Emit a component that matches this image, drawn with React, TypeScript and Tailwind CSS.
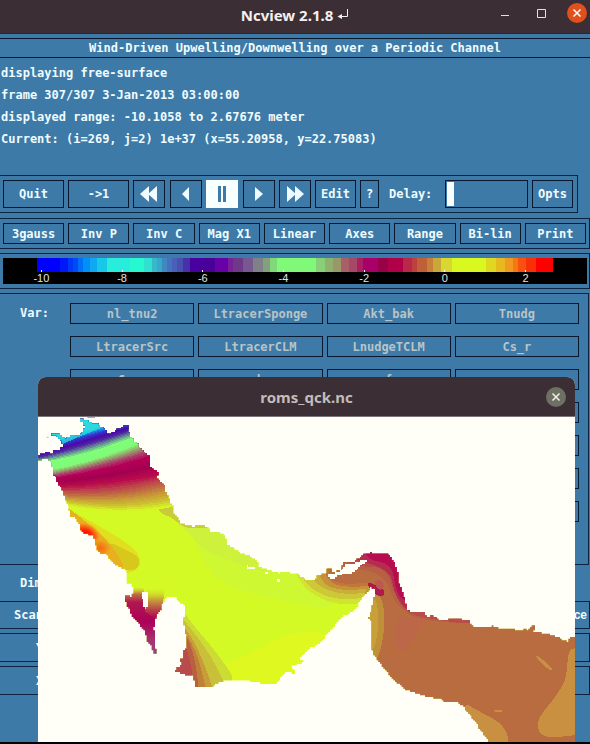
import React from "react";

type Point = [number, number];

/* ---------- colour scale ---------- */

// [colour, relative width]
const SCALE: [string, number][] = [
  ["#0000ff", 68], ["#0018f8", 25], ["#0038f8", 15], ["#0048f8", 14], ["#0070f8", 15],
  ["#0090f8", 21], ["#10a8f0", 22], ["#18c8e8", 30], ["#28ecdc", 70], ["#28f8d0", 42],
  ["#30e0d0", 23], ["#38b8c8", 15], ["#38a8c8", 15], ["#4088c0", 15], ["#4870c0", 15],
  ["#4860b8", 15], ["#4850b0", 18], ["#4830a8", 22], ["#4800a0", 40], ["#480098", 35],
  ["#6800a8", 40], ["#782098", 15], ["#703888", 30], ["#785890", 30], ["#808088", 30],
  ["#80a080", 20], ["#80d878", 22], ["#80f878", 116], ["#88d078", 27], ["#90b070", 25],
  ["#989868", 22], ["#a86068", 26], ["#a84868", 22], ["#a82060", 18], ["#a80068", 47],
  ["#980048", 30], ["#b00048", 45], ["#b82848", 25], ["#c04040", 15], ["#c06038", 30],
  ["#c88038", 20], ["#c8a838", 22], ["#d8d830", 33], ["#d8f820", 105], ["#e0d820", 30],
  ["#e8b820", 25], ["#f09820", 25], ["#f87810", 15], ["#f85010", 23], ["#f83008", 30],
  ["#ff0000", 52],
];

const TICKS = ["-10", "-8", "-6", "-4", "-2", "0", "2"];

/* ---------- map ---------- */

const COAST =
  "114,165 125,158 135,155 150,158 158,152 175,148 182,140 188,130 185,118 175,108 160,104 155,98 170,99 185,108 195,115 205,108 225,106 245,96 248,85 255,76 248,65 240,60 242,53 252,58 265,66 275,72 290,72 300,82 315,84 318,100 335,97 350,86 362,83 372,76 383,80 388,100 395,115 408,130 420,145 435,160 448,172 450,185 448,200 462,212 475,215 473,226 470,235 480,245 492,255 495,275 500,285 508,300 515,315 522,325 522,340 532,352 540,368 560,375 575,378 590,373 612,373 615,380 630,388 632,395 660,398 670,405 678,420 682,436 698,445 720,460 750,468 772,483 776,500 805,512 835,518 855,516 885,521 900,532 915,542 935,540 950,527 982,515 982,506 995,507 994,515 1020,510 1030,484 1050,487 1078,470 1088,460 1105,460 1110,455 1115,460 1155,460 1170,470 1180,487 1186,502 1195,520 1196,548 1205,575 1215,602 1222,630 1235,635 1272,637 1280,648 1295,645 1315,662 1345,662 1346,656 1378,657 1408,663 1420,680 1465,678 1474,673 1480,682 1522,684 1550,689 1570,687 1586,690 1588,678 1600,675 1606,688 1602,695 1640,700 1670,712 1702,725 1712,708 1725,712 1725,1024 1470,1024 1445,990 1425,960 1400,928 1375,905 1335,905 1325,896 1290,890 1260,882 1215,865 1180,835 1155,805 1140,785 1125,765 1115,740 1115,660 1103,648 1112,635 1116,615 1122,600 1123,565 1115,560 1105,575 1085,598 1065,632 1025,655 990,695 965,725 925,750 900,778 910,786 892,795 872,797 885,818 858,815 845,832 830,850 790,848 740,840 690,838 670,843 655,850 630,862 612,860 588,862 580,825 578,823 550,822 540,815 522,815 530,800 545,790 540,775 550,770 552,750 560,740 558,700 550,660 548,650 555,645 555,615 540,605 530,592 515,588 500,595 488,610 484,630 475,640 468,655 462,690 465,735 472,760 460,755 455,735 440,720 440,705 430,685 420,670 400,650 388,625 375,600 375,585 395,590 400,565 395,550 378,548 378,520 380,510 360,498 340,485 318,460 300,455 288,435 285,415 278,405 255,400 240,385 240,370 225,350 212,345 205,315 200,300 190,280 185,262 172,240 160,215 155,185 150,178 130,175 118,182";

const ISLANDS = [
  "425,575 445,578 443,622 436,628 430,610",
  "987,522 1000,520 1020,512 1035,492 1060,488 1080,482 1095,478 1102,487 1085,497 1070,512 1055,522 1030,522 1010,530 990,538",
  "738,497 760,499 766,505 745,504",
  "795,514 803,516 803,522 795,521",
  "830,535 838,536 838,544 830,544",
];

const parse = (s: string): Point[] =>
  s.split(" ").map((p) => p.split(",").map(Number) as Point);

// The model grid has square cells, so a shore runs along cell edges only.
function stepped(source: string): string {
  const cell = 5;
  const snap = (v: number) => Math.round(v / cell) * cell;
  const pts = parse(source);
  let d = `M${snap(pts[0][0])} ${snap(pts[0][1])}`;
  pts.forEach(([x0, y0], i) => {
    const [x1, y1] = pts[(i + 1) % pts.length];
    const n = Math.max(1, Math.round(Math.hypot(x1 - x0, y1 - y0) / 8));
    for (let k = 1; k <= n; k++) {
      d += `H${snap(x0 + ((x1 - x0) * k) / n)}V${snap(y0 + ((y1 - y0) * k) / n)}`;
    }
  });
  return d + "Z";
}

// Closed quadratic curve through the middles of the polygon's sides.
function rounded(source: string): string {
  const pts = parse(source);
  const mid = (a: Point, b: Point) => `${(a[0] + b[0]) / 2} ${(a[1] + b[1]) / 2}`;
  let d = `M${mid(pts[pts.length - 1], pts[0])}`;
  pts.forEach((p, i) => {
    d += `Q${p[0]} ${p[1]} ${mid(p, pts[(i + 1) % pts.length])}`;
  });
  return d + "Z";
}

// Contours of the northern gulf: colour and height at x = 150, 315 and 480.
const LEVELS: [number, number, number, number, number, number][] = [
  [40, 225, 225, 116, 72, 30],
  [32, 150, 235, 130, 84, 44],
  [44, 60, 205, 142, 94, 50],
  [76, 8, 168, 154, 106, 56],
  [80, 40, 160, 164, 117, 60],
  [100, 140, 150, 174, 130, 68],
  [128, 255, 120, 185, 145, 80],
  [128, 250, 120, 210, 168, 105],
  [150, 165, 105, 220, 180, 125],
  [168, 80, 110, 228, 191, 142],
  [182, 0, 88, 238, 208, 165],
  [164, 0, 80, 248, 230, 198],
  [184, 10, 76, 260, 250, 225],
  [190, 66, 76, 270, 270, 243],
  [192, 108, 66, 280, 286, 262],
  [200, 150, 56, 287, 300, 282],
  [204, 190, 48, 294, 316, 305],
  [214, 245, 38, 305, 332, 326],
];

function contourBands() {
  const bands: { d: string; fill: string }[] = [];
  for (let i = LEVELS.length - 1; i > 0; i--) {
    for (let k = 0; k < 3; k++) {
      const t = k / 3;
      const v = LEVELS[i].map((a, j) => a + (LEVELS[i - 1][j] - a) * t);
      const [r, g, b, l, m, e] = v;
      let d = "M90 40";
      for (let x = 90; x <= 570; x += 20) {
        const u = (x - 150) / 165;
        const y = l + (m - l) * u + ((e - 2 * m + l) / 2) * u * (u - 1);
        d += `L${x} ${Math.round(y)}`;
      }
      bands.push({ d: d + "V40Z", fill: `rgb(${Math.round(r)} ${Math.round(g)} ${Math.round(b)})` });
    }
  }
  return bands;
}

const BANDS = contourBands();

const PATCHES: [string, string][] = [
  // open gulf
  ["#cef932", "570,330 640,370 760,450 900,500 960,560 1020,610 960,625 800,590 680,560 620,500 580,420"],
  ["#cef23c", "540,330 600,340 700,390 800,470 820,520 740,500 660,470 600,440 570,400 530,370"],
  ["#c8cc38", "480,280 520,300 545,350 575,368 640,366 640,380 580,386 545,378 515,350 470,335"],
  ["#def820", "640,800 740,770 840,705 950,690 1000,720 900,820 840,880 650,880"],
  // west shore
  ["#e0e020", "190,320 240,345 320,390 400,440 425,480 410,512 370,520 300,520 190,400"],
  ["#d8c81c", "320,420 380,450 418,470 418,500 385,515 340,490"],
  ["#e8b020", "190,310 240,350 290,390 340,440 375,500 360,525 290,500 190,400"],
  // gulf of Bahrain and Qatar
  ["#ccdc34", "530,600 560,650 610,710 660,770 720,860 520,900"],
  ["#c8c038", "530,630 560,670 600,720 640,780 690,880 520,900"],
  ["#c89c38", "530,650 565,695 595,750 620,810 650,900 520,900"],
  ["#c08038", "530,660 560,700 590,760 605,810 625,900 520,900"],
  ["#b86040", "530,680 560,705 580,760 590,810 600,900 510,900"],
  ["#b84c4c", "520,700 555,730 570,780 580,830 570,870 500,860"],
  // strait
  ["#d0e430", "870,470 900,550 950,590 1010,612 1080,612 1140,580 1160,460"],
  ["#ccc838", "885,470 910,545 960,582 1020,598 1090,594 1140,570 1160,460"],
  ["#c8b038", "915,480 940,545 985,572 1040,582 1100,578 1150,560 1160,460"],
  ["#c89038", "945,480 965,545 1000,565 1050,570 1110,564 1150,560 1160,450"],
  ["#c07838", "965,480 980,535 1010,556 1060,560 1120,556 1150,560 1160,450"],
  ["#b86c40", "985,470 985,535 1020,550 1080,550 1115,545 1118,565 1095,600 1090,760 1140,900 1300,980 1420,1100 1820,1100 1820,620 1240,600 1180,400"],
  ["#c09038", "1100,560 1135,575 1153,620 1153,690 1142,750 1125,790 1090,740 1090,600"],
  ["#c8a038", "1095,580 1125,590 1135,630 1134,700 1120,755 1090,730"],
  ["#b86044", "990,480 1050,505 1110,510 1160,540 1180,600 1230,650 1300,662 1360,668 1450,670 1400,600 1240,600 1190,400 1000,440"],
  ["#b84c48", "1030,480 1080,500 1130,498 1165,520 1180,570 1205,620 1240,646 1320,660 1430,675 1420,620 1240,610 1200,420 1040,440"],
  ["#b42c50", "1040,470 1090,484 1140,500 1175,525 1180,570 1205,615 1240,645 1260,600 1210,420 1060,430"],
  ["#b80c50", "1085,440 1110,480 1150,485 1178,505 1185,560 1205,600 1240,600 1210,420"],
  ["#b01850", "1100,545 1125,552 1155,570 1150,590 1130,585 1110,568"],
  ["#bc5850", "1120,545 1142,535 1155,560 1138,572"],
  ["#bc6848", "1190,650 1225,650 1290,660 1250,690 1225,750 1195,755 1180,700"],
  // open sea
  ["#c89040", "1705,740 1750,750 1750,1000 1690,1010 1620,1010 1610,960 1650,910 1680,870 1700,830"],
  ["#c89040", "1380,900 1440,935 1500,965 1530,1010 1510,1060 1440,1060"],
  ["#c89040", "1605,764 1622,772 1660,806 1652,812 1622,788"],
  ["#c89040", "1480,927 1508,929 1504,937 1484,935"],
];

function SeaSurface() {
  return (
    <svg viewBox="114 50 1611 974" className="block w-full" role="img" aria-label="free-surface">
      <defs>
        <clipPath id="sea">
          <path d={stepped(COAST)} />
        </clipPath>
        <radialGradient id="hot">
          <stop offset="0" stopColor="#ff0000" />
          <stop offset="0.35" stopColor="#ff2808" />
          <stop offset="0.7" stopColor="#f88018" />
          <stop offset="1" stopColor="#e8c020" stopOpacity="0" />
        </radialGradient>
        <radialGradient id="warm">
          <stop offset="0" stopColor="#f86810" />
          <stop offset="0.5" stopColor="#f09018" />
          <stop offset="1" stopColor="#e8b820" stopOpacity="0" />
        </radialGradient>
        <linearGradient id="inlet" x1="0" y1="0" x2="0" y2="1">
          <stop offset="0" stopColor="#ccc030" stopOpacity="0" />
          <stop offset="0.1" stopColor="#c07040" />
          <stop offset="0.22" stopColor="#b01850" />
          <stop offset="0.5" stopColor="#ac0058" />
          <stop offset="0.75" stopColor="#a83070" />
          <stop offset="1" stopColor="#904888" />
        </linearGradient>
        <linearGradient id="branch" x1="0" y1="0" x2="0" y2="1">
          <stop offset="0" stopColor="#d8f028" stopOpacity="0" />
          <stop offset="0.4" stopColor="#c8a038" />
          <stop offset="0.7" stopColor="#b84848" />
          <stop offset="1" stopColor="#b00050" />
        </linearGradient>
      </defs>
      <g clipPath="url(#sea)" shapeRendering="crispEdges">
        <path d="M100 40H1740V1040H100Z" fill="#d4fa26" />
        {PATCHES.map(([fill, points]) => (
          <path key={points} d={rounded(points)} fill={fill} />
        ))}
        {BANDS.map(({ d, fill }) => (
          <path key={d} d={d} fill={fill} />
        ))}
        <path d="M225 40H330L300 84L240 108L180 135L150 95H225Z" fill="#30e0dc" opacity="0.7" />
        <ellipse cx="258" cy="402" rx="52" ry="36" transform="rotate(30 258 402)" fill="url(#hot)" />
        <ellipse cx="300" cy="444" rx="40" ry="34" fill="url(#warm)" />
        <path d="M365 560H430L436 628L480 640V770H430L365 620Z" fill="url(#inlet)" />
        <path d="M440 560H495L486 632L465 655L436 635Z" fill="url(#branch)" />
      </g>
      <g fill="#fffff8" shapeRendering="crispEdges">
        {ISLANDS.map((s) => (
          <path key={s} d={stepped(s)} />
        ))}
      </g>
      <path d="M262 50H285V53H262Z" fill="#c8b820" />
      <path d="M140 109H146V113H140Z" fill="#90e0d8" />
    </svg>
  );
}

/* ---------- controls ---------- */

const box = "border border-[#08182f]";
const panel = "border-y border-r border-[#0b2340]";

function Btn({ children, className = "" }: { children?: React.ReactNode; className?: string }) {
  return (
    <button type="button" className={`flex items-center justify-center whitespace-nowrap ${box} ${className}`}>
      {children}
    </button>
  );
}

function IconBtn({ label, d, active = false }: { label: string; d: string; active?: boolean }) {
  return (
    <button
      type="button"
      aria-label={label}
      className={`flex h-7 w-8 items-center justify-center ${
        active ? "border border-[#f8ffff] bg-[#f8ffff] text-[#3d7aa8]" : box
      }`}
    >
      <svg viewBox="0 0 20 18" className="h-[18px] w-5" fill="currentColor" aria-hidden="true">
        <path d={d} />
      </svg>
    </button>
  );
}

const OPTIONS = ["3gauss", "Inv P", "Inv C", "Mag X1", "Linear", "Axes", "Range", "Bi-lin", "Print"];

const VARIABLES = [
  "nl_tnu2", "LtracerSponge", "Akt_bak", "Tnudg",
  "LtracerSrc", "LtracerCLM", "LnudgeTCLM", "Cs_r",
  "Cs_w", "h", "f", "pm",
];

export default function App() {
  return (
    <div className="relative flex min-h-screen flex-col overflow-hidden bg-[#3d7aa8] font-['DejaVu_Sans_Mono','Liberation_Mono',monospace] text-[12px] font-bold text-[#effcff]">
      <header className="grid h-[34px] grid-cols-[1fr_auto_1fr] items-center border-b border-[#1f2a3c] bg-[#3c2e35] pb-1 font-['Noto_Sans','Open_Sans',sans-serif]">
        <span />
        <h1 className="flex items-center gap-1 text-[15px] leading-5 text-[#f4f0ee]">
          Ncview 2.1.8
          <svg viewBox="0 0 12 12" className="size-3" fill="none" stroke="currentColor" aria-hidden="true">
            <path d="M10.500 0V7.500H3" />
            <path d="M0.500 7.500L5 5V10Z" fill="currentColor" stroke="none" />
          </svg>
        </h1>
        <div className="flex items-center justify-end gap-4 pr-[3px] pb-1">
          <button type="button" aria-label="Minimize" className="flex size-5 items-center justify-center">
            <svg viewBox="0 0 20 20" className="size-5" stroke="#e8e0dc" aria-hidden="true">
              <path d="M6 12.500H14" />
            </svg>
          </button>
          <button type="button" aria-label="Maximize" className="flex size-5 items-center justify-center">
            <svg viewBox="0 0 20 20" className="size-5" fill="none" stroke="#e8e0dc" aria-hidden="true">
              <path d="M6.500 6.500H14.500V14.500H6.500Z" />
            </svg>
          </button>
          <button type="button" aria-label="Close" className="flex size-5 items-center justify-center rounded-full bg-[#e0501c]">
            <svg viewBox="0 0 20 20" className="size-5" stroke="#fff" strokeWidth="1.500" aria-hidden="true">
              <path d="M6.500 6.500L13.500 13.500M13.500 6.500L6.500 13.500" />
            </svg>
          </button>
        </div>
      </header>

      <h2 className="mt-1 flex h-5 items-center justify-center border-y border-[#08182f]">
        Wind-Driven Upwelling/Downwelling over a Periodic Channel
      </h2>

      <div className="mt-1 mb-6 pl-px leading-[22px]">
        <p>displaying free-surface</p>
        <p>frame 307/307 3-Jan-2013 03:00:00</p>
        <p>displayed range: -10.1058 to 2.67676 meter</p>
        <p>Current: (i=269, j=2) 1e+37 (x=55.20958, y=22.75083)</p>
      </div>

      <div className={`mt-px mr-3 flex items-center gap-1 py-1 pr-1 pl-[3px] ${panel}`}>
        <Btn className="h-7 w-[61px]">Quit</Btn>
        <Btn className="h-7 w-[61px]">-&gt;1</Btn>
        <div className="flex w-[178px] justify-between">
          <IconBtn label="Rewind" d="M10 1V17L1 9ZM18 1V17L9 9Z" />
          <IconBtn label="Backward" d="M13 2V16L6 9Z" />
          <IconBtn label="Pause" d="M6 1H9V17H6ZM11 1H14V17H11Z" active />
          <IconBtn label="Forward" d="M6 2V16L14 9Z" />
          <IconBtn label="Fast forward" d="M2 1V17L11 9ZM10 1V17L19 9Z" />
        </div>
        <Btn className="h-7 w-[41px]">Edit</Btn>
        <Btn className="h-7 w-[19px]">?</Btn>
        <label htmlFor="delay" className="flex-1 pl-1.5">
          Delay:
        </label>
        <div className={`flex h-7 w-[83px] items-center p-px ${box}`}>
          <span className="h-full w-[7px] shrink-0 bg-[#f8ffff]" />
          <input id="delay" type="text" className="w-full min-w-0 bg-transparent outline-none" />
        </div>
        <Btn className="h-7 w-[41px]">Opts</Btn>
      </div>

      <div className={`mt-[5px] grid grid-cols-9 gap-1 py-1 pr-[3px] pl-[3px] ${panel}`}>
        {OPTIONS.map((o) => (
          <Btn key={o} className="h-[21px]">
            {o}
          </Btn>
        ))}
      </div>

      <div className={`mt-1 py-1 pr-0.5 pl-[3px] ${panel}`}>
        <div className="h-[26px] bg-black">
          <div className="mr-[34px] ml-[34px] flex h-[14px]">
            {SCALE.map(([c, w], i) => (
              <span key={i} style={{ flexGrow: w, flexBasis: 0, backgroundColor: c }} />
            ))}
          </div>
          <div className="mr-[21px] -ml-0.5 -mt-0.5 grid grid-cols-7 font-['Liberation_Sans',Arial,sans-serif] text-[11px] leading-[13px] font-normal text-[#e4e4e4]">
            {TICKS.map((t) => (
              <span key={t} className="flex flex-col items-center">
                <span className="h-0.5 w-px bg-white" />
                {t}
              </span>
            ))}
          </div>
        </div>
      </div>

      <section className={`mt-1 mr-px flex h-[272px] items-start pt-[9px] ${panel}`}>
        <h3 className="w-[70px] shrink-0 pl-5 leading-5">Var:</h3>
        <div className="grid flex-1 grid-cols-4 gap-x-1 gap-y-3 pr-[9px] text-[#b9c4c6]">
          {Array.from({ length: 28 }, (_, i) => (
            <Btn key={i} className="h-[21px]">
              {VARIABLES[i]}
            </Btn>
          ))}
        </div>
      </section>

      <div className="flex h-9 items-center pl-5">Dim:</div>
      <div className={`flex h-7 items-center justify-between pr-0.5 pl-3.5 ${panel}`}>
        <span>Scan:</span>
        <span className="font-['Liberation_Sans',Arial,sans-serif]">since</span>
      </div>
      <div className={`mt-1 flex h-[29px] items-center pl-9 ${panel}`}>Y:</div>
      <div className={`mt-1 flex h-[29px] items-center pl-9 ${panel}`}>X:</div>
      <footer className="mt-auto h-0.5 bg-black" />

      <section className="absolute top-[377px] right-[15px] left-[38px] overflow-hidden rounded-t-lg bg-[#fffff8]">
        <header className="grid h-10 grid-cols-[1fr_auto_1fr] items-center border-b border-[#7c7478] bg-[#3c2e35] font-['Noto_Sans','Open_Sans',sans-serif]">
          <span />
          <h2 className="text-[15px] leading-5 text-[#c4bcba]">roms_qck.nc</h2>
          <div className="flex justify-end pr-[9px]">
            <button type="button" aria-label="Close plot" className="flex size-5 items-center justify-center rounded-full bg-[#6e7064]">
              <svg viewBox="0 0 20 20" className="size-5" stroke="#f0f0e8" strokeWidth="1.500" aria-hidden="true">
                <path d="M6.500 6.500L13.500 13.500M13.500 6.500L6.500 13.500" />
              </svg>
            </button>
          </div>
        </header>
        <SeaSurface />
      </section>
    </div>
  );
}
